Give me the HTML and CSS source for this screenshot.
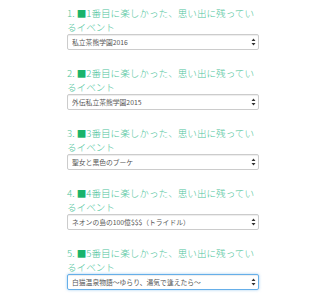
FILE: index.html
```html
<html><head>
<title>思い出に残っているイベント</title>
<link rel="stylesheet" href="styles.css">
</head><body>

<div class="survey">

<div class="question">
  <h2>1. <span class="mark">■</span>1番目に楽しかった、思い出に残っているイベント</h2>
  <div class="pick">
    <select><option>私立茶熊学園2016</option></select>
    <svg class="arrows" width="5" height="8" viewBox="0 0 5 8"><path d="M2.5 0.5 L4.5 3 L0.5 3 Z M2.5 7.5 L4.5 5 L0.5 5 Z" fill="#333"/></svg>
  </div>
</div>

<div class="question">
  <h2>2. <span class="mark">■</span>2番目に楽しかった、思い出に残っているイベント</h2>
  <div class="pick">
    <select><option>外伝私立茶熊学園2015</option></select>
    <svg class="arrows" width="5" height="8" viewBox="0 0 5 8"><path d="M2.5 0.5 L4.5 3 L0.5 3 Z M2.5 7.5 L4.5 5 L0.5 5 Z" fill="#333"/></svg>
  </div>
</div>

<div class="question">
  <h2>3. <span class="mark">■</span>3番目に楽しかった、思い出に残っているイベント</h2>
  <div class="pick">
    <select><option>聖女と黒色のブーケ</option></select>
    <svg class="arrows" width="5" height="8" viewBox="0 0 5 8"><path d="M2.5 0.5 L4.5 3 L0.5 3 Z M2.5 7.5 L4.5 5 L0.5 5 Z" fill="#333"/></svg>
  </div>
</div>

<div class="question">
  <h2>4. <span class="mark">■</span>4番目に楽しかった、思い出に残っているイベント</h2>
  <div class="pick">
    <select><option>ネオンの島の100億$$$（トライドル）</option></select>
    <svg class="arrows" width="5" height="8" viewBox="0 0 5 8"><path d="M2.5 0.5 L4.5 3 L0.5 3 Z M2.5 7.5 L4.5 5 L0.5 5 Z" fill="#333"/></svg>
  </div>
</div>

<div class="question">
  <h2>5. <span class="mark">■</span>5番目に楽しかった、思い出に残っているイベント</h2>
  <div class="pick">
    <select class="focused"><option>白猫温泉物語〜ゆらり、湯気で逢えたら〜</option></select>
    <svg class="arrows" width="5" height="8" viewBox="0 0 5 8"><path d="M2.5 0.5 L4.5 3 L0.5 3 Z M2.5 7.5 L4.5 5 L0.5 5 Z" fill="#333"/></svg>
  </div>
</div>

</div>

</body></html>
```

FILE: styles.css
```css
body {
  margin:0;
  background-color:#ffffff;
  font-family:"Noto Sans CJK JP", sans-serif;
}
div.survey {
  width:192px;
  margin:0 auto;
  padding-top:6px;
  padding-left:2px;
}
div.question {
  margin-bottom:16px;
}
div.question h2 {
  margin:0;
  font-size:9.6px;
  line-height:14px;
  font-weight:300;
  color:#4cc49a;
}
span.mark {
  color:#19b36b;
}
div.pick {
  position:relative;
}
div.pick select {
  display:block;
  width:100%;
  height:16px;
  margin:0;
  padding:0 10px 0 4px;
  -webkit-appearance:none;
  appearance:none;
  background-color:#ffffff;
  border:1px solid #cccccc;
  border-radius:2px;
  box-shadow:inset 0 1px 1px rgba(0,0,0,0.075);
  font-family:"Noto Sans CJK JP", sans-serif;
  font-size:6.8px;
  color:#555555;
}
div.pick select.focused {
  border-color:#66afe9;
  box-shadow:inset 0 1px 1px rgba(0,0,0,0.075), 0 0 3px rgba(102,175,233,0.6);
}
svg.arrows {
  position:absolute;
  right:3px;
  top:4px;
}
```
